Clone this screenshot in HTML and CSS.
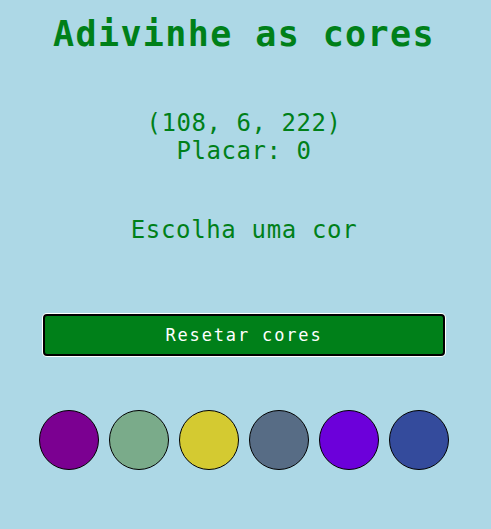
FILE: index.html
```html
<!DOCTYPE html>
<html lang="pt">
<head>
<meta charset="utf-8">
<title>Adivinhe as cores</title>
<link rel="stylesheet" href="styles.css">
</head>
<body>
  <h1 class="title">Adivinhe as cores</h1>
  <div class="info">
    <p class="rgb">(108, 6, 222)</p>
    <p class="score">Placar: 0</p>
  </div>
  <p class="message">Escolha uma cor</p>
  <button class="reset">Resetar cores</button>
  <div class="balls">
    <div class="ball" style="background:#7b0091"></div>
    <div class="ball" style="background:#7aab8a"></div>
    <div class="ball" style="background:#d4ca31"></div>
    <div class="ball" style="background:#576c85"></div>
    <div class="ball" style="background:#6c00da"></div>
    <div class="ball" style="background:#344b9c"></div>
  </div>
</body>
</html>
```
FILE: styles.css
```css
html, body {
  margin: 0;
  padding: 0;
}
body {
  background: #add8e6;
  color: #008019;
  font-family: "DejaVu Sans Mono", monospace;
  text-align: center;
  display: flex;
  flex-direction: column;
  align-items: center;
  padding-right: 3px;
}
.title {
  font-size: 35px;
  font-weight: bold;
  letter-spacing: 1.4px;
  margin: 14px 0 0;
  line-height: 41px;
}
.info {
  margin-top: 54px;
}
.rgb, .score {
  font-size: 24px;
  letter-spacing: 0.55px;
  margin: 0;
  line-height: 28px;
}
.message {
  font-size: 24px;
  letter-spacing: 0.65px;
  margin: 51px 0 0;
  line-height: 28px;
}
.reset {
  margin-top: 70px;
  width: 402px;
  height: 42px;
  background: #008019;
  color: #ffffff;
  font-family: "DejaVu Sans Mono", monospace;
  font-size: 17px;
  letter-spacing: 1.85px;
  border: 2px solid #000;
  border-radius: 4px;
  box-shadow: 0 0 0 1px #ffffff;
  padding: 0;
}
.balls {
  display: flex;
  gap: 10px;
  margin-top: 54px;
}
.ball {
  width: 58px;
  height: 58px;
  border: 1px solid #000;
  border-radius: 50%;
}
```
